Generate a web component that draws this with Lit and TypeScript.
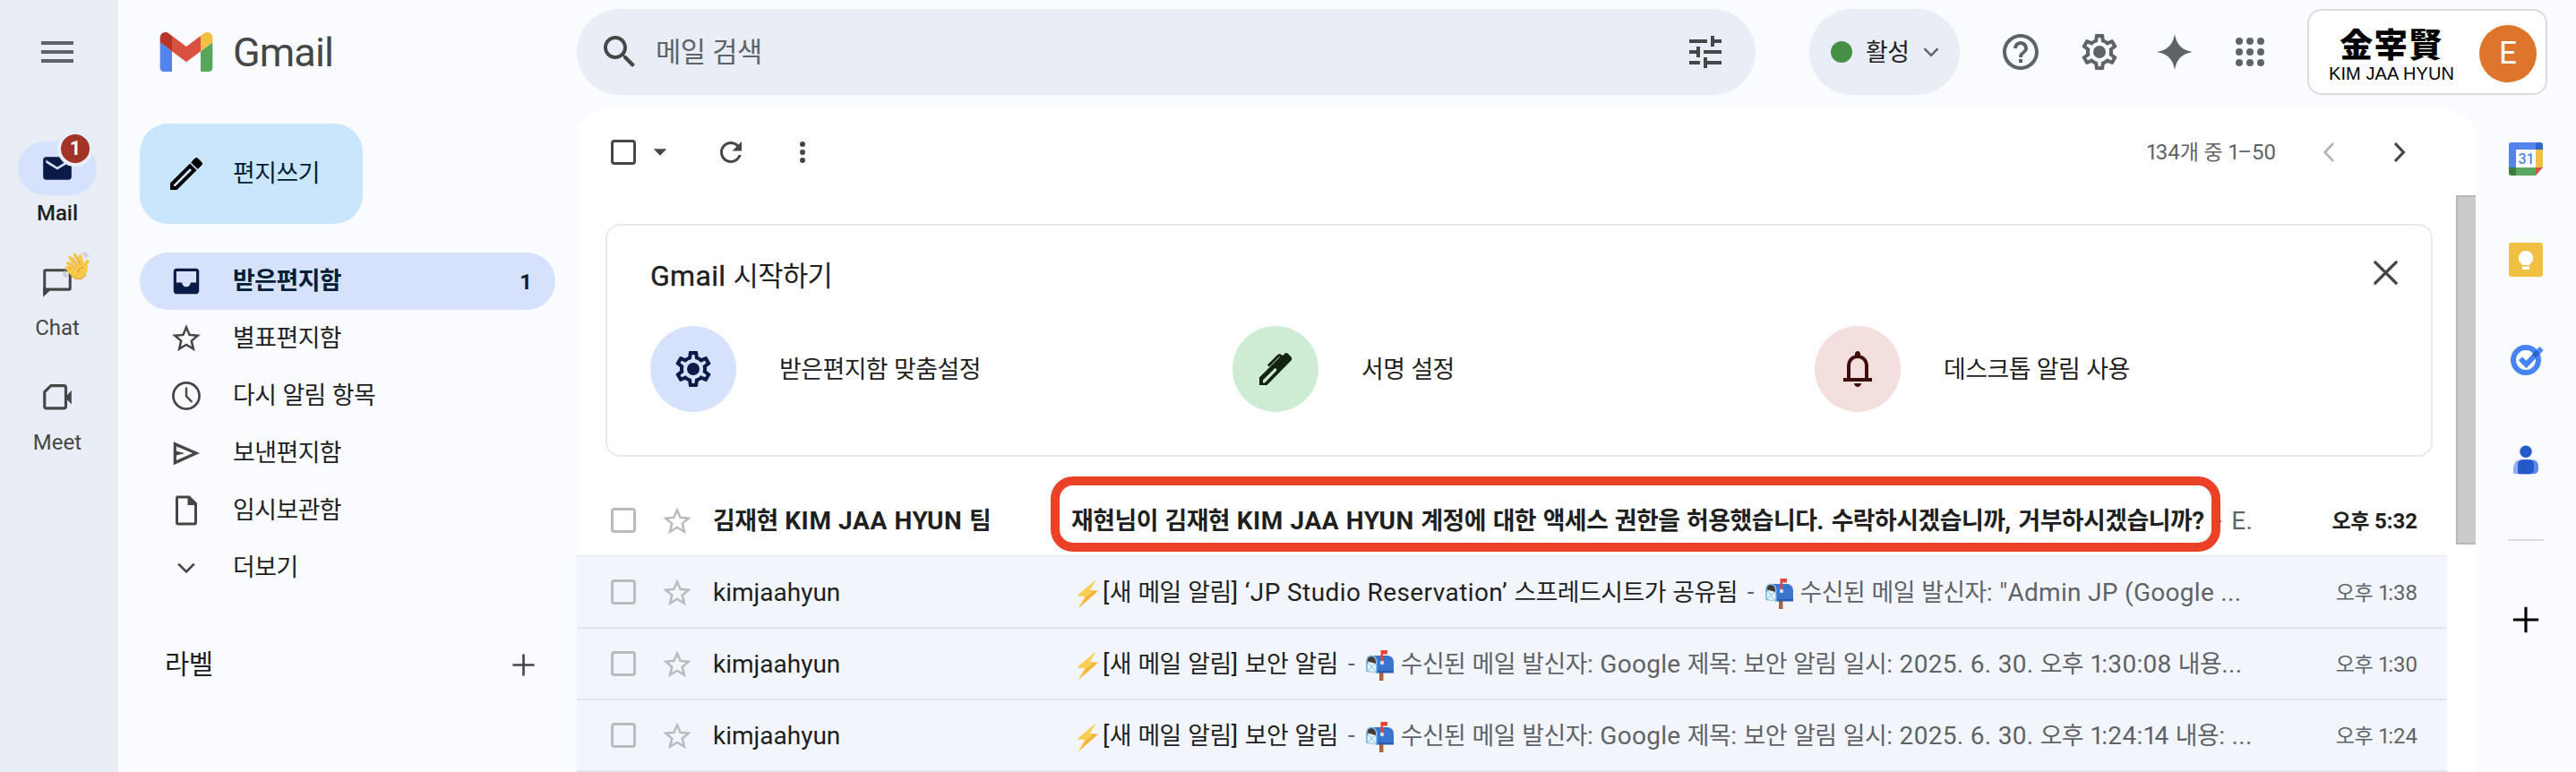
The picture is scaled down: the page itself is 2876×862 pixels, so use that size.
import { LitElement, html, css, svg } from "lit";
import { customElement, property } from "lit/decorators.js";

const HANGUL = /([\u3130-\u318f\uac00-\ud7a3]+)/;

/** Latin run; the figure one is set narrower than the other figures. */
const latin = (text: string) =>
  html`<span class="la">${text.split(/(1)/).filter((s) => s.length).map((s) => (s === "1" ? html`<span class="one">1</span>` : s))}</span>`;

/** Text whose Hangul and Latin runs are set in their own faces. */
const mixed = (text: string) =>
  text.split(HANGUL).filter((s) => s.length).map((s) =>
    HANGUL.test(s) ? html`<span class="ko">${s}</span>` : latin(s)
  );

const GEAR =
  "M19.43 12.98c.04-.32.07-.64.07-.98s-.03-.66-.07-.98l2.11-1.65c.19-.15.24-.42.12-.64l-2-3.46c-.09-.16-.26-.25-.44-.25-.06 0-.12.01-.17.03l-2.49 1c-.52-.4-1.08-.73-1.69-.98l-.38-2.65C14.46 2.18 14.25 2 14 2h-4c-.25 0-.46.18-.49.42l-.38 2.65c-.61.25-1.17.59-1.69.98l-2.49-1c-.06-.02-.12-.03-.18-.03-.17 0-.34.09-.43.25l-2 3.46c-.13.22-.07.49.12.64l2.11 1.65c-.04.32-.07.65-.07.98s.03.66.07.98l-2.11 1.65c-.19.15-.24.42-.12.64l2 3.46c.09.16.26.25.44.25.06 0 .12-.01.17-.03l2.49-1c.52.4 1.08.73 1.69.98l.38 2.65c.03.24.24.42.49.42h4c.25 0 .46-.18.49-.42l.38-2.65c.61-.25 1.17-.59 1.69-.98l2.49 1c.06.02.12.03.18.03.17 0 .34-.09.43-.25l2-3.46c.12-.22.07-.49-.12-.64l-2.11-1.65zm-1.98-1.71c.04.31.05.52.05.73 0 .21-.02.43-.05.73l-.14 1.13.89.7 1.08.84-.7 1.21-1.27-.51-1.04-.42-.9.68c-.43.32-.84.56-1.25.73l-1.06.43-.16 1.13-.2 1.35h-1.4l-.19-1.35-.16-1.13-1.06-.43c-.43-.18-.83-.41-1.23-.71l-.91-.7-1.06.43-1.27.51-.7-1.21 1.08-.84.89-.7-.14-1.13c-.03-.31-.05-.54-.05-.74s.02-.43.05-.73l.14-1.13-.89-.7-1.08-.84.7-1.21 1.27.51 1.04.42.9-.68c.43-.32.84-.56 1.25-.73l1.06-.43.16-1.13.2-1.35h1.39l.19 1.35.16 1.13 1.06.43c.43.18.83.41 1.23.71l.91.7 1.06-.43 1.27-.51.7 1.21-1.07.85-.89.7.14 1.13z";

const GLYPHS: Record<string, unknown> = {
  menu: svg`<path d="M3 6h18v2H3zM3 11h18v2H3zM3 16h18v2H3z"/>`,
  mail: svg`<path d="M20 4H4c-1.100 0-2 .9-2 2v12c0 1.100.9 2 2 2h16c1.100 0 2-.9 2-2V6c0-1.100-.9-2-2-2zm0 4l-8 5-8-5V6l8 5 8-5v2z"/>`,
  chat: svg`<path fill="none" stroke="currentColor" stroke-width="1.900" d="M3 16.500V3.500Q3 3 3.500 3h17q.5 0 .5.500v12.500q0 .5-.5.500H4.500L3 18z"/><path d="M2.050 15v7l5-5z"/>`,
  meet: svg`<path fill="none" stroke="currentColor" stroke-width="2" stroke-linejoin="round" d="M7.500 3.500h9q1.500 0 1.500 1.500v13q0 1.500-1.500 1.500h-12Q3 19.500 3 18V8z"/><path d="M17.500 11.800l4.500-5v10z"/>`,
  search: svg`<path d="M15.500 14h-.79l-.28-.27C15.410 12.590 16 11.110 16 9.500 16 5.910 13.090 3 9.500 3S3 5.910 3 9.500 5.910 16 9.500 16c1.610 0 3.090-.59 4.230-1.570l.27.28v.79l5 4.990L20.490 19l-4.990-5zm-6 0C7.010 14 5 11.990 5 9.500S7.010 5 9.500 5 14 7.010 14 9.500 11.990 14 9.500 14z"/>`,
  tune: svg`<path d="M3 17v2h6v-2H3zM3 5v2h10V5H3zm10 16v-2h8v-2h-8v-2h-2v6h2zM7 9v2H3v2h4v2h2V9H7zm14 4v-2H11v2h10zm-6-4h2V7h4V5h-4V3h-2v6z"/>`,
  help: svg`<path d="M11 18h2v-2h-2v2zm1-16C6.480 2 2 6.480 2 12s4.480 10 10 10 10-4.480 10-10S17.520 2 12 2zm0 18c-4.410 0-8-3.590-8-8s3.590-8 8-8 8 3.590 8 8-3.590 8-8 8zm0-14c-2.210 0-4 1.790-4 4h2c0-1.100.9-2 2-2s2 .9 2 2c0 2-3 1.750-3 5h2c0-2.250 3-2.500 3-5 0-2.210-1.790-4-4-4z"/>`,
  gear: svg`<path d=${GEAR}/><circle cx="12" cy="12" r="3.500"/>`,
  spark: svg`<path d="M12 2C13 8 16 11 22 12C16 13 13 16 12 22C11 16 8 13 2 12C8 11 11 8 12 2z"/>`,
  apps: svg`${[6, 12, 18].map((y) => [6, 12, 18].map((x) => svg`<circle cx=${x} cy=${y} r="2"/>`))}`,
  edit: svg`<path d="M14.060 9.020l.92.92L5.920 19H5v-.92l9.060-9.060M17.660 3c-.25 0-.51.1-.7.290l-1.830 1.830 3.750 3.750 1.830-1.830c.39-.39.39-1.020 0-1.410l-2.340-2.340c-.2-.2-.45-.29-.71-.29zm-3.600 3.190L3 17.250V21h3.750L17.810 9.940l-3.750-3.750z"/><path d="M14.600 5.700l3.700 3.700 2.200-2.200-3.700-3.700z"/>`,
  inbox: svg`<path d="M19 3H4.990c-1.110 0-1.980.89-1.980 2L3 19c0 1.100.88 2 1.990 2H19c1.100 0 2-.9 2-2V5c0-1.100-.9-2-2-2zm0 10h-4c0 1.660-1.350 3-3 3s-3-1.340-3-3H4.990V5H19v8z"/>`,
  star: svg`<path d="M22 9.240l-7.190-.62L12 2 9.190 8.630 2 9.240l5.460 4.730L5.820 21 12 17.270 18.180 21l-1.630-7.030L22 9.240zM12 15.400l-3.760 2.270 1-4.280-3.320-2.880 4.380-.38L12 6.100l1.710 4.040 4.380.38-3.320 2.880 1 4.280L12 15.400z"/>`,
  clock: svg`<g fill="none" stroke="currentColor"><circle cx="12" cy="12" r="9.200" stroke-width="1.700"/><path stroke-width="1.500" d="M12 6v6.200l4 4.200"/></g>`,
  send: svg`<path d="M3 4v16.300L21.500 12zM5 7.200L16.500 12 5 17v-3.500L11 12 5 10.500z" fill-rule="evenodd"/>`,
  file: svg`<path fill-rule="evenodd" d="M5.500 1h9L20 6.500V21q0 2-2 2H6q-2 0-2-2V2.500Q4 1 5.500 1zM6 3v18h12V8h-5V3z"/>`,
  down: svg`<path fill="none" stroke="currentColor" stroke-width="2.200" d="M5 8.500l7 7 7-7"/>`,
  left: svg`<path fill="none" stroke="currentColor" stroke-width="2.200" d="M16 4l-7.500 8L16 20"/>`,
  right: svg`<path fill="none" stroke="currentColor" stroke-width="2.600" d="M8 4l7.500 8L8 20"/>`,
  plus: svg`<path d="M13.100 2h-2.200v8.900H2v2.200h8.900V22h2.200v-8.900H22v-2.200h-8.900z"/>`,
  close: svg`<path fill="none" stroke="currentColor" stroke-width="2.700" stroke-linecap="round" d="M3 3l18 18M21 3L3 21"/>`,
  caret: svg`<path d="M4 8h16l-8 8z"/>`,
  refresh: svg`<path d="M17.650 6.350C16.200 4.900 14.210 4 12 4c-4.420 0-7.990 3.580-7.990 8s3.570 8 7.990 8c3.730 0 6.840-2.550 7.730-6h-2.080c-.82 2.330-3.040 4-5.650 4-3.310 0-6-2.690-6-6s2.690-6 6-6c1.660 0 3.140.69 4.220 1.780L13 11h7V4l-2.350 2.350z"/>`,
  more: svg`<circle cx="12" cy="6" r="2"/><circle cx="12" cy="12" r="2"/><circle cx="12" cy="18" r="2"/>`,
  pen: svg`<g transform="translate(-15 -14) scale(.5)"><path fill-rule="evenodd" d="M36 70v-8.500L61 36.500l1.500.500 2-2.500q1.500-1 3 0l4 4q1.500 1.500.5 3.500L44.500 70zM40 67.500h2L55 54q1-2-1.500-3L40 64.500z"/><path fill="none" stroke="currentColor" stroke-width="3" d="M46 48.500L57 37.500q1.500-1.500 3 0l4 3"/></g>`,
  bell: svg`<path fill-rule="evenodd" d="M4 19v-2h2v-7q0-2.075 1.250-3.687Q8.500 4.700 10.500 4.200v-.7q0-.625.438-1.062Q11.375 2 12 2t1.062.438q.438.437.438 1.062v.7q2 .5 3.250 2.113Q18 7.925 18 10v7h2v2Zm8 3q-.825 0-1.412-.587Q10 20.825 10 20h4q0 .825-.587 1.413Q12.825 22 12 22ZM8 17h8v-7q0-1.650-1.175-2.825Q13.650 6 12 6q-1.650 0-2.825 1.175Q8 8.350 8 10Z"/>`,
};

@customElement("g-icon")
class GIcon extends LitElement {
  @property() name = "";
  static styles = css`
    :host { display: block; flex: none; width: 48px; height: 48px; }
    svg { display: block; width: 100%; height: 100%; fill: currentColor; overflow: visible; }
  `;
  render() {
    return html`<svg viewBox="0 0 24 24">${GLYPHS[this.name]}</svg>`;
  }
}

const gmailLogo = html`<svg class="logo" viewBox="52 42 88 66">
  <path fill="#5383ec" d="M58 108h14V74L52 59v43c0 3.320 2.690 6 6 6"/>
  <path fill="#58a65c" d="M120 108h14c3.320 0 6-2.690 6-6V59l-20 15"/>
  <path fill="#f1bf42" d="M120 48v26l20-15v-8c0-7.420-8.470-11.650-14.400-7.200"/>
  <path fill="#d95140" d="M72 74V48l24 18 24-18v26L96 92"/>
  <path fill="#b33629" d="M52 51v8l20 15V48l-5.600-4.200c-5.940-4.450-14.400-.22-14.400 7.200"/>
</svg>`;

const bolt = html`<svg class="bolt" viewBox="0 0 26 34">
  <path fill="#f8cf52" d="M23 1L1 19.500 10.500 20 3 33 25 13.800 15.500 13.500z"/>
  <path fill="#f3b33d" d="M15.500 13.500L25 13.800 3 33l8.500-12.500 7-5z"/>
</svg>`;

const mailbox = html`<svg class="mailbox" viewBox="0 0 32 34">
  <path fill="#a9643c" d="M15 23h4.500v11H15z"/>
  <path fill="#3b74cf" d="M8 6h17q6 1 6 8v11H11z"/>
  <path fill="#2a5cb4" d="M11 23h20v2.500H11z"/>
  <path fill="#7fc4ee" d="M0 13Q0 5.500 6 5.500T12.500 13v12.500L0 24z"/>
  <path fill="#4a3a35" d="M1.500 13Q1.500 7 6 7t5 6v2h-9.500z"/>
  <path fill="#e9f5fd" d="M2 12.500l9 2.500v9.500L2 23z"/>
  <path fill="none" stroke="#86bfe6" d="M2 12.500l4 6 5-3.500M2 23l4-4.500 5 6"/>
  <path fill="#e0483e" d="M16.500 0H24v4.500h-5v9h-2.500z"/>
  <circle cx="18" cy="14" r="2.200" fill="#cfe0f7"/>
</svg>`;

const wave = html`<svg class="wave" viewBox="0 0 32 34">
  <g fill="none" stroke-linecap="round">
    <path stroke="#f8c84b" stroke-width="3.800" d="M6 13l7 10M8.500 6.500l8 13M14 3.500l6.500 14M20 5l4 12M4.500 18.500l6 6.500"/>
    <path stroke="#f8c84b" stroke-width="3.800" d="M28.500 11Q26 14 27 19"/>
    <path stroke="#d98b2b" stroke-width=".9" d="M8.500 12.500l7 9M11.500 7.500l6.500 10.500M17.200 6.500l4.300 11M7 18l6 7"/>
    <path stroke="#b9bdc4" stroke-width="1.200" d="M22 2q4 1 5 5M25 .8q3 1.200 4 4M2 22q.5 4 4 6M.5 25q1 3 3.500 4.500"/>
  </g>
  <path fill="#f8c84b" d="M9 21L22 14l6.500 2q.8 6-2 10.500-4 6-10.500 5Q11 30.500 7 24z"/>
  <path fill="none" stroke="#d98b2b" stroke-width="1" d="M17.500 24Q18.500 18.500 24 18M8.500 26q4 5.500 9 5.700 6 .3 9.500-5"/>
</svg>`;

interface Mail { from: string; title: string; snippet: string; time: string; unread?: boolean }

const MAILS: Mail[] = [
  { from: "김재현 KIM JAA HYUN 팀", title: "재현님이 김재현 KIM JAA HYUN 계정에 대한 액세스 권한을 허용했습니다. 수락하시겠습니까, 거부하시겠습니까?", snippet: "E.", time: "오후 5:32", unread: true },
  { from: "kimjaahyun", title: "[새 메일 알림] ‘JP Studio Reservation’ 스프레드시트가 공유됨", snippet: "수신된 메일 발신자: \"Admin JP (Google ...", time: "오후 1:38" },
  { from: "kimjaahyun", title: "[새 메일 알림] 보안 알림", snippet: "수신된 메일 발신자: Google 제목: 보안 알림 일시: 2025. 6. 30. 오후 1:30:08 내용...", time: "오후 1:30" },
  { from: "kimjaahyun", title: "[새 메일 알림] 보안 알림", snippet: "수신된 메일 발신자: Google 제목: 보안 알림 일시: 2025. 6. 30. 오후 1:24:14 내용: ...", time: "오후 1:24" },
];

const FOLDERS = [
  ["inbox", "받은편지함"], ["star", "별표편지함"], ["clock", "다시 알림 항목"],
  ["send", "보낸편지함"], ["file", "임시보관함"], ["down", "더보기"],
];

@customElement("app-root")
class AppRoot extends LitElement {
  static styles = css`
    :host {
      display: grid; grid-template-columns: 132px 1fr; height: 862px; overflow: hidden;
      background: #f9fbff; color: #1f1f1f; font: 400 28px/40px Roboto, "Noto Sans CJK KR", sans-serif;
      white-space: nowrap;
    }
    * { box-sizing: border-box; }
    span { white-space: pre; }
    .ko { font-family: "Noto Sans CJK KR", sans-serif; font-size: .96em; letter-spacing: -.019em; line-height: 1; }
    .la { line-height: 1; }
    .one { letter-spacing: -.1em; }

    .rail { background: #e9eef6; display: flex; flex-direction: column; align-items: center; padding-right: 4px; }
    .rail .menu { margin-top: 34px; color: #5f6368; }
    .app { display: flex; flex-direction: column; align-items: center; width: 88px; height: 128px; font-size: 24px; color: #444746; }
    .app:first-of-type { margin-top: 76px; }
    .pill { position: relative; width: 88px; height: 60px; border-radius: 30px; display: grid; place-items: center; }
    .on .pill { background: #d6e2fb; color: #0b1b47; }
    .on { color: #1f1f1f; font-weight: 500; }
    .pill g-icon { width: 38px; height: 38px; }
    .badge { position: absolute; left: 44px; top: -12px; width: 40px; height: 40px; border-radius: 50%; border: 4px solid #e9eef6; background: #a33327; color: #fff; font: 700 22px/32px Roboto, sans-serif; text-align: center; }
    .wave { position: absolute; left: 50px; top: -5px; width: 31px; height: 33px; }

    .right { display: grid; grid-template-rows: 122px 740px; min-width: 0; }
    .header { display: flex; align-items: flex-start; }
    .brand { display: flex; align-items: center; width: 512px; padding-left: 46px; height: 116px; color: #444746; }
    .logo { width: 60px; height: 44px; margin-right: 22px; }
    .word { font-size: 45px; letter-spacing: -.9px; padding-top: 2px; }
    .search { margin-top: 10px; width: 1316px; height: 96px; border-radius: 48px; background: #e9eef6; display: flex; align-items: center; padding: 0 32px 0 24px; color: #444746; }
    .search .q { flex: 1; margin-left: 16px; font-size: 32px; color: #5f6368; }
    .status { margin: 10px 0 0 60px; width: 168px; height: 96px; border-radius: 48px; background: #e9eef6; display: flex; align-items: center; padding-left: 24px; }
    .status span { padding-top: 1px; }
    .dot { width: 24px; height: 24px; border-radius: 50%; background: #478e47; margin-right: 15px; }
    .status g-icon { width: 26px; height: 26px; margin-left: 12px; color: #5f6368; }
    .tools { display: flex; margin: 34px 0 0 44px; gap: 40px; color: #5f6368; }
    .tools g-icon:nth-child(3) { margin-left: -4px; }
    .tools g-icon:nth-child(4) { margin-left: -4px; }
    .account { margin: 10px 0 0 40px; width: 268px; height: 96px; border: 2px solid #dadce0; border-radius: 16px; background: #fff; display: flex; align-items: center; padding-left: 20px; }
    .who { width: 144px; text-align: center; color: #000; padding-top: 4px; }
    .han { display: block; font: 900 37px/40px "Noto Sans CJK KR", sans-serif; letter-spacing: 1.500px; }
    .en { display: block; font: 400 20px/22px "Liberation Sans", sans-serif; padding-top: 3px; letter-spacing: .1px; }
    .avatar { margin: 4px 0 0 26px; width: 64px; height: 64px; border-radius: 50%; background: #de752c; color: #fff; font: 400 35px/64px Roboto, sans-serif; text-align: center; }

    .body { display: grid; grid-template-columns: 512px 2120px 112px; }
    .nav { padding: 16px 24px 0; }
    .compose { width: 249px; height: 112px; border-radius: 32px; background: #c9e6fc; color: #001d35; display: flex; align-items: center; padding-left: 28px; margin-bottom: 32px; }
    .compose g-icon { color: #000; margin-right: 28px; }
    .folder { height: 64px; width: 464px; border-radius: 32px; display: flex; align-items: center; padding: 0 26px 0 33px; }
    .folder g-icon { width: 38px; height: 38px; margin-right: 33px; color: #444746; }
    .folder g-icon.small { width: 30px; height: 30px; margin: 0 37px 0 4px; }
    .folder g-icon[name="file"] { width: 36px; height: 36px; margin: 0 34px 0 1px; }
    .folder.cur { background: #d6e2fb; color: #001d35; font-weight: 700; }
    .folder.cur g-icon { color: #0b1b47; }
    .folder .n { margin-left: auto; font-size: 24px; padding-top: 1px; }
    .labels { display: flex; justify-content: space-between; align-items: center; padding: 0 21px 0 28px; margin-top: 44px; height: 64px; font-size: 31px; }
    .labels g-icon { width: 29px; height: 29px; color: #444746; }

    .main { background: #fff; border-radius: 32px 32px 0 0; display: grid; grid-template-rows: 96px 644px; }
    .bar { display: flex; align-items: center; height: 96px; padding: 0 70px 0 38px; color: #444746; }
    .box { flex: none; width: 28px; height: 28px; border: 3px solid #444746; border-radius: 4px; }
    .bar g-icon { width: 36px; height: 36px; }
    .bar .caret { width: 22px; height: 22px; margin: 0 50px 0 16px; }
    .bar .vert { margin-left: 44px; }
    .bar .range { margin-left: auto; font-size: 24px; color: #5f6368; }
    .bar .nav-i { width: 30px; height: 30px; }
    .bar .prev { margin: 0 49px 0 44px; color: #b4b5b6; }
    .scroll { display: grid; grid-template-columns: 2098px 22px; }
    .thumb { height: 390px; background: #cbcbcb; border: 2px solid #b8b8b8; border-right: 0; }
    .card { margin: 32px 26px 32px 32px; height: 260px; border: 2px solid #e9eaee; border-radius: 16px; padding: 34px 35px 0 48px; }
    .head { display: flex; justify-content: space-between; font-size: 32px; height: 44px; align-items: center; }
    .head .la { letter-spacing: .3px; -webkit-text-stroke: .4px currentColor; }
    .head g-icon { width: 31px; height: 31px; color: #444746; margin-bottom: 7px; }
    .tips { display: grid; grid-template-columns: repeat(3, 650px); margin-top: 34px; }
    .tip { display: flex; align-items: center; gap: 48px; }
    .tip > span { padding-top: 2px; }
    .disc { width: 96px; height: 96px; border-radius: 50%; display: grid; place-items: center; }
    .blue { background: #d6e2fb; color: #0b1b47; }
    .green { background: #cdecd3; color: #12240f; }
    .pink { background: #f3dfdd; color: #3c0d0a; }

    .row { width: 2088px; height: 80px; border-bottom: 2px solid #e2e5ea; background: #f2f6fc; display: flex; align-items: center; padding: 0 33px 0 38px; }
    .row.unread { background: #fff; font-weight: 700; border-color: #eceff1; }
    .row .box { border-color: #b9bbbe; }
    .row g-icon { width: 38px; height: 38px; margin: 2px 0 0 27px; color: #b9bbbe; }
    .from { width: 399px; margin-left: 22px; text-indent: -1px; padding-top: 1px; }
    .subject { position: relative; flex: 1; display: flex; align-items: center; }
    .title, .snip { padding-top: 1px; }
    .title .la { letter-spacing: .4px; }
    .unread .from .la, .unread .title .la { letter-spacing: .6px; }
    .snip { color: #5f6368; font-weight: 400; }
    .snip .la { letter-spacing: .3px; }
    .dash { padding: 0 4px; }
    .bolt { width: 26px; height: 34px; margin: 4px 4px 0 5px; }
    .mailbox { width: 32px; height: 34px; margin: 4px 7px 0 1px; }
    .time { font-size: 24px; color: #5f6368; padding-top: 1px; }
    .unread .time { color: #1f1f1f; }
    .mark { position: absolute; left: -23px; top: -29px; width: 1306px; height: 84px; border: 10px solid #eb4127; border-radius: 25px; }

    .side { display: flex; flex-direction: column; align-items: center; padding-top: 36px; }
    .side svg { width: 40px; height: 40px; margin-bottom: 72px; overflow: visible; }
    .side hr { width: 40px; height: 2px; border: 0; margin: -4px 0 71px; background: #dadce0; flex: none; }
    .side g-icon { width: 34px; height: 34px; color: #000; }
  `;

  private mail(m: Mail) {
    return html`<div class="row ${m.unread ? "unread" : ""}">
      <span class="box"></span><g-icon name="star"></g-icon>
      <span class="from">${mixed(m.from)}</span>
      <div class="subject">
        ${m.unread ? "" : bolt}<span class="title">${mixed(m.title)}</span><span class="snip dash"> - </span>${m.unread ? "" : mailbox}<span class="snip">${mixed(m.snippet)}</span>
        ${m.unread ? html`<span class="mark"></span>` : ""}
      </div>
      <span class="time">${mixed(m.time)}</span>
    </div>`;
  }

  render() {
    return html`
      <div class="rail">
        <g-icon class="menu" name="menu"></g-icon>
        <section class="app on"><div class="pill"><g-icon name="mail"></g-icon><span class="badge">1</span></div><span>Mail</span></section>
        <section class="app"><div class="pill"><g-icon name="chat"></g-icon>${wave}</div><span>Chat</span></section>
        <section class="app"><div class="pill"><g-icon name="meet"></g-icon></div><span>Meet</span></section>
      </div>
      <div class="right">
        <div class="header">
          <div class="brand">${gmailLogo}<span class="word">Gmail</span></div>
          <div class="search"><g-icon name="search"></g-icon><span class="q">${mixed("메일 검색")}</span><g-icon name="tune"></g-icon></div>
          <div class="status"><i class="dot"></i><span>${mixed("활성")}</span><g-icon name="down"></g-icon></div>
          <div class="tools"><g-icon name="help"></g-icon><g-icon name="gear"></g-icon><g-icon name="spark"></g-icon><g-icon name="apps"></g-icon></div>
          <div class="account"><div class="who"><span class="han">金宰賢</span><span class="en">KIM JAA HYUN</span></div><div class="avatar">E</div></div>
        </div>
        <div class="body">
          <div class="nav">
            <div class="compose"><g-icon name="edit"></g-icon><span>${mixed("편지쓰기")}</span></div>
            ${FOLDERS.map(([icon, label], i) => html`<div class="folder ${i ? "" : "cur"}"><g-icon class=${icon === "down" ? "small" : ""} name=${icon}></g-icon><span>${mixed(label)}</span>${i ? "" : html`<span class="n">1</span>`}</div>`)}
            <div class="labels"><span>${mixed("라벨")}</span><g-icon name="plus"></g-icon></div>
          </div>
          <div class="main">
            <div class="bar">
              <span class="box"></span><g-icon class="caret" name="caret"></g-icon>
              <g-icon name="refresh"></g-icon><g-icon class="vert" name="more"></g-icon>
              <span class="range">${mixed("134개 중 1–50")}</span>
              <g-icon class="nav-i prev" name="left"></g-icon><g-icon class="nav-i" name="right"></g-icon>
            </div>
            <div class="scroll">
              <div>
                <div class="card">
                  <div class="head"><span>${mixed("Gmail 시작하기")}</span><g-icon name="close"></g-icon></div>
                  <div class="tips">
                    <div class="tip"><div class="disc blue"><g-icon name="gear"></g-icon></div><span>${mixed("받은편지함 맞춤설정")}</span></div>
                    <div class="tip"><div class="disc green"><g-icon name="pen"></g-icon></div><span>${mixed("서명 설정")}</span></div>
                    <div class="tip"><div class="disc pink"><g-icon name="bell"></g-icon></div><span>${mixed("데스크톱 알림 사용")}</span></div>
                  </div>
                </div>
                ${MAILS.map((m) => this.mail(m))}
              </div>
              <div class="thumb"></div>
            </div>
          </div>
          <div class="side">
            <svg viewBox="0 0 40 40">
              <path fill="#fff" d="M8 8h23v23H8z"/><path fill="#5383ec" d="M4 1h27v8H9v20H1V4q0-3 3-3z"/><path fill="#3065c9" d="M31 1h5q3 0 3 3v5h-8z"/>
              <path fill="#f1bf42" d="M31 9h8v20h-8z"/><path fill="#5aa75f" d="M9 29h22v9H9z"/><path fill="#3b7d40" d="M1 29h8v9H4q-3 0-3-3z"/><path fill="#d95140" d="M31 29h8l-8 9z"/>
              <text x="20.500" y="25" text-anchor="middle" font-family="Roboto, sans-serif" font-size="16" font-weight="500" fill="#5383ec">31</text>
            </svg>
            <svg viewBox="0 0 40 40"><rect x="1" y="1" width="38" height="38" rx="3" fill="#f1bf42"/><path fill="#fff" d="M20 10a8 8 0 0 0-4.500 14.700V26h9v-1.300A8 8 0 0 0 20 10zM16 27.500h8V31h-8z"/></svg>
            <svg viewBox="0 0 40 40"><circle cx="20" cy="20" r="14" fill="#fff" stroke="#4683f3" stroke-width="6"/><path fill="none" stroke="#4683f3" stroke-width="6" d="M14 18.500l6.500 6.500L37.500 7"/><path stroke="#2d62cd" stroke-width="6" d="M29 15.500l4.500-4.500"/></svg>
            <svg viewBox="0 1.700 40 40"><circle cx="20" cy="12" r="6.700" fill="#2459c9"/><path fill="#8fadf8" d="M15 21h10v16H8q-2 0-2-2v-5q1-9 9-9z"/><path fill="#5f87f0" d="M18 21h8q8 0 8 8v2q0 6-6 6H18z"/><path fill="#2459c9" d="M17 21h6q6 0 6 6v4q0 6-6 6H13q-2 0-2-2v-8q0-6 6-6z"/></svg>
            <hr/>
            <g-icon name="plus"></g-icon>
          </div>
        </div>
      </div>`;
  }
}
